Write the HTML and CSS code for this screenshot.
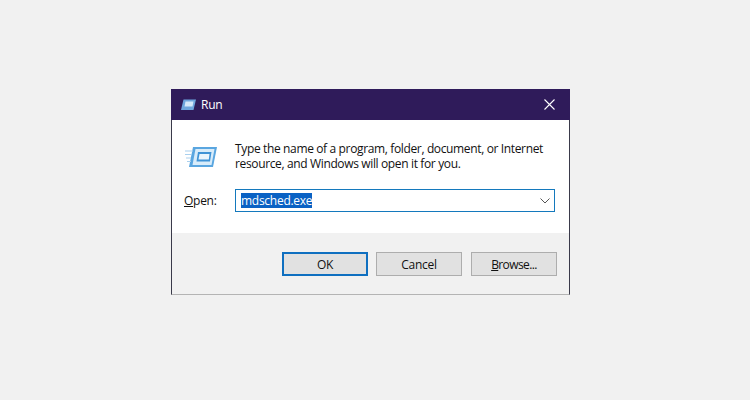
FILE: index.html
```html
<!DOCTYPE html>
<html lang="en">
<head>
<meta charset="utf-8">
<title>Run</title>
<link rel="stylesheet" href="styles.css">
</head>
<body>
<div class="window">
  <div class="titlebar">
    <svg class="title-icon" width="15" height="12" viewBox="0 0 15 12"><path d="M2.500 0.500H15L12.500 11H0Z" fill="#6fa6de"/><path d="M4.500 2.500H12.500L11.500 7.500H3.500Z" fill="#d5e8fa"/></svg>
    <span class="title">Run</span>
    <svg class="close" width="11" height="11" viewBox="0 0 11 11"><path d="M0.500 0.500L10.500 10.500M10.500 0.500L0.500 10.500" stroke="#fff" stroke-width="1.100" fill="none"/></svg>
  </div>
  <div class="content">
    <div class="intro">
      <svg class="run-icon" width="32" height="22" viewBox="0 0 32 22">
        <path d="M8 1H32L28 21H4Z" fill="#5aa6e0"/>
        <path d="M10.500 3H29.500L26.500 19H7.500Z" fill="#d8ecfa"/>
        <path d="M13 6H26.500L25 15.500H11.500Z" fill="#3f93d6"/>
        <path d="M14.500 8H24.500L23.800 13.500H13.500Z" fill="#eaf5fd"/>
        <path d="M0 5H8M0 8.500H7M1 12H6M2 15.500H6" stroke="#a9d0ee" stroke-width="1.200"/>
      </svg>
      <p class="message">Type the name of a program, folder, document, or Internet<br>resource, and Windows will open it for you.</p>
    </div>
    <div class="open-row">
      <label class="open-label"><u>O</u>pen:</label>
      <div class="combo">
        <span class="selected">mdsched.exe</span>
        <svg class="chevron" width="10" height="6" viewBox="0 0 10 6"><path d="M0.500 0.500L5 5L9.500 0.500" stroke="#555" fill="none"/></svg>
      </div>
    </div>
  </div>
  <div class="footer">
    <button class="btn default">OK</button>
    <button class="btn">Cancel</button>
    <button class="btn browse"><u>B</u>rowse...</button>
  </div>
</div>
</body>
</html>
```
FILE: styles.css
```css
* { box-sizing: border-box; }
html, body { margin: 0; height: 100%; }
body {
  background: #f1f1f1;
  padding: 89px 0 0 171px;
  font-family: "Open Sans", "Noto Sans", sans-serif;
  font-size: 12px;
  letter-spacing: -0.27px;
  color: #111;
}
.window {
  width: 399px;
  height: 206px;
  display: flex;
  flex-direction: column;
  border-left: 1px solid #3a3a4a;
  border-right: 1px solid #3a3a4a;
  border-bottom: 1px solid #b4b4b4;
}
.titlebar {
  height: 31px;
  margin: 0 -1px;
  background: #2f1b5a;
  color: #fff;
  display: flex;
  align-items: center;
  padding: 0 15px 0 10px;
}
.title-icon { margin-right: 5px; }
.title { flex: 1; font-size: 12px; }
.content {
  height: 113px;
  background: #fff;
  padding: 21px 14px 0 12px;
}
.intro { display: flex; align-items: flex-start; }
.run-icon { margin: 5px 18px 0 1px; flex: none; }
.message { margin: 0; white-space: nowrap; line-height: 15px; letter-spacing: -0.36px; }
.open-row { display: flex; align-items: center; margin-top: 18px; }
.open-label { width: 51px; }
.combo {
  width: 320px;
  height: 23px;
  border: 1px solid #1479bd;
  display: flex;
  align-items: center;
  justify-content: space-between;
  padding: 0 3px 0 5px;
  background: #fff;
}
.selected { background: #0a62c4; color: #fff; line-height: 15px; }
.chevron { margin-right: 1px; }
.footer {
  flex: 1;
  background: #f1f1f1;
  display: flex;
  justify-content: flex-end;
  align-items: flex-start;
  gap: 8px;
  padding: 19px 12px 0 0;
}
.btn {
  width: 86px;
  height: 24px;
  background: #e1e1e1;
  border: 1px solid #adadad;
  font: inherit;
  letter-spacing: inherit;
  color: #111;
  padding: 0;
}
.browse { margin-left: 1px; letter-spacing: -0.6px; }
.default { border: 2px solid #0f6fc0; }
```
